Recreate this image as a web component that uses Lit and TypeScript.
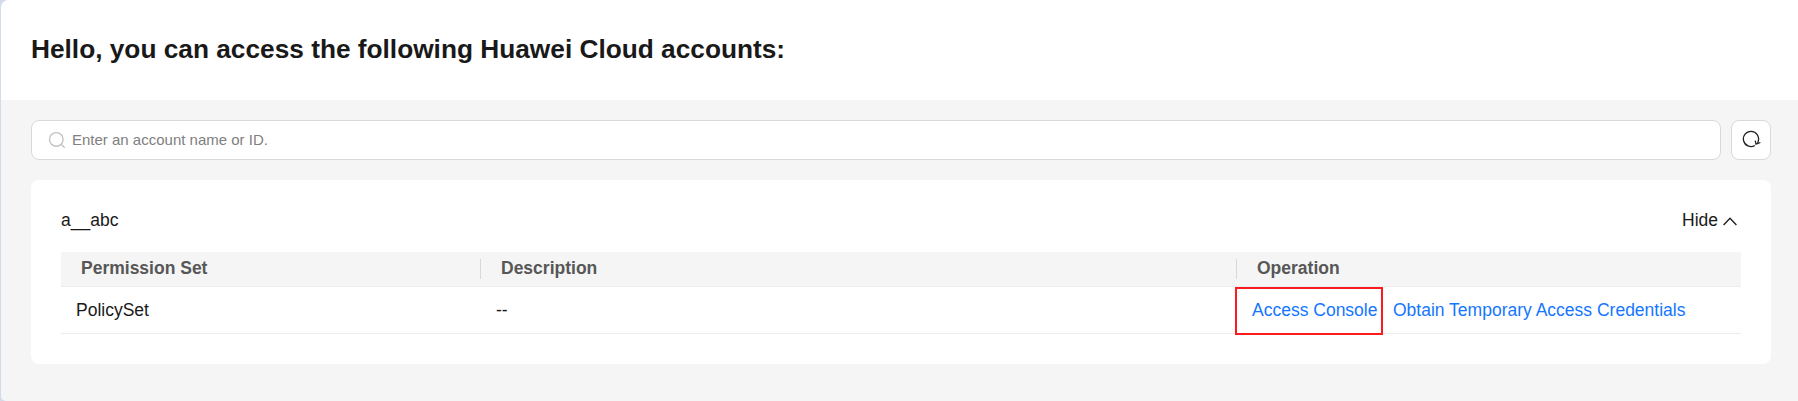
import { LitElement, html, css } from "lit";
import { customElement, property } from "lit/decorators.js";

interface PermissionRow {
  name: string;
  description: string;
}

@customElement("account-card")
class AccountCard extends LitElement {
  @property() name = "";
  @property({ attribute: false }) rows: PermissionRow[] = [];

  static styles = css`
    :host {
      display: block;
      box-sizing: border-box;
      height: 184px;
      padding: 28px 30px 30px;
      background: #fff;
      border-radius: 8px;
    }
    .top {
      display: flex;
      justify-content: space-between;
      height: 44px;
      line-height: 24px;
    }
    .toggle {
      display: flex;
      padding-right: 4px;
    }
    .chevron {
      width: 14px;
      height: 9px;
      margin: 9px 0 0 5px;
    }
    .line {
      display: grid;
      grid-template-columns: 420px 756px 1fr;
      box-sizing: border-box;
      border-bottom: 1px solid #ececec;
    }
    .head {
      height: 35px;
      background: #f5f5f5;
      color: #575757;
      font-weight: bold;
      line-height: 33px;
    }
    .head .cell {
      display: flex;
      padding-left: 20px;
    }
    .head .cell + .cell {
      padding-left: 0;
    }
    .head .cell + .cell::before {
      content: "";
      width: 1px;
      height: 20px;
      margin: 7px 20px 0 -1px;
      background: #d8d8d8;
    }
    .row {
      height: 47px;
      line-height: 46px;
    }
    .row .cell {
      display: flex;
      padding-left: 15px;
    }
    .row .ops {
      padding-left: 0;
      color: #1476ff;
    }
    .marked {
      box-sizing: border-box;
      width: 148px;
      height: 48px;
      margin: 0 10px 0 -2px;
      padding-left: 15px;
      border: 2px solid #fb1a1e;
      line-height: 42px;
      white-space: nowrap;
    }
  `;

  render() {
    return html`
      <div class="top">
        <span>${this.name}</span>
        <span class="toggle">Hide
          <svg class="chevron" viewBox="0 0 14 9" fill="none" stroke="#222" stroke-width="1.4">
            <path d="M.6 8 7 1.2 13.4 8" />
          </svg>
        </span>
      </div>
      <div class="line head">
        <div class="cell">Permission Set</div>
        <div class="cell">Description</div>
        <div class="cell">Operation</div>
      </div>
      ${this.rows.map(
        (r) => html`<div class="line row">
          <div class="cell">${r.name}</div>
          <div class="cell">${r.description}</div>
          <div class="cell ops">
            <span class="marked">Access Console</span>
            <span>Obtain Temporary Access Credentials</span>
          </div>
        </div>`
      )}
    `;
  }
}

@customElement("app-root")
class AppRoot extends LitElement {
  static styles = css`
    :host {
      display: block;
      box-sizing: border-box;
      height: 401px;
      padding-left: 1px;
      overflow: hidden;
      background: #d3dae9;
      color: #191919;
      font: 17.5px "Liberation Sans", Arial, sans-serif;
    }
    .panel {
      height: 401px;
      overflow: hidden;
      border-radius: 8px 0 0 5px;
      background: #f5f5f5;
    }
    .title {
      margin: 0;
      height: 100px;
      padding-left: 30px;
      background: #fff;
      font-size: 26.25px;
      font-weight: bold;
      line-height: 98px;
    }
    .content {
      display: flex;
      flex-direction: column;
      gap: 20px;
      padding: 20px 27px 0 30px;
    }
    .tools {
      display: flex;
      gap: 10px;
    }
    .search,
    .refresh {
      display: flex;
      box-sizing: border-box;
      height: 40px;
      border: 1px solid #d9d9d9;
      border-radius: 8px;
      background: #fff;
    }
    .search {
      flex: 1;
      padding-left: 16px;
      color: #808080;
      font-size: 15px;
      line-height: 38px;
    }
    .glass {
      width: 18px;
      height: 18px;
      margin: 10px 6px 0 0;
    }
    .refresh {
      width: 40px;
      padding: 9px 0 0 10px;
    }
    .arrow {
      flex: none;
      width: 20px;
      height: 20px;
    }
  `;

  render() {
    return html`
      <div class="panel">
        <h1 class="title">Hello, you can access the following Huawei Cloud accounts:</h1>
        <div class="content">
          <div class="tools">
            <div class="search">
              <svg class="glass" viewBox="0 0 18 18" fill="none" stroke="#c2c2c2" stroke-width="1.4">
                <circle cx="8.3" cy="8.4" r="6.8" />
                <path d="m13.1 13.2 3.6 3.5" />
              </svg>
              <span>Enter an account name or ID.</span>
            </div>
            <div class="refresh">
              <svg class="arrow" viewBox="0 0 20 20" fill="none" stroke="#222" stroke-width="1.3">
                <path d="M12.8 15.5A7.6 7.6 0 1 1 16.2 11.3L15.7 13" />
                <path d="m13.2 10.6.8 3.5 4.4-1.6" />
              </svg>
            </div>
          </div>
          <account-card name="a__abc" .rows=${[{ name: "PolicySet", description: "--" }]}></account-card>
        </div>
      </div>
    `;
  }
}
